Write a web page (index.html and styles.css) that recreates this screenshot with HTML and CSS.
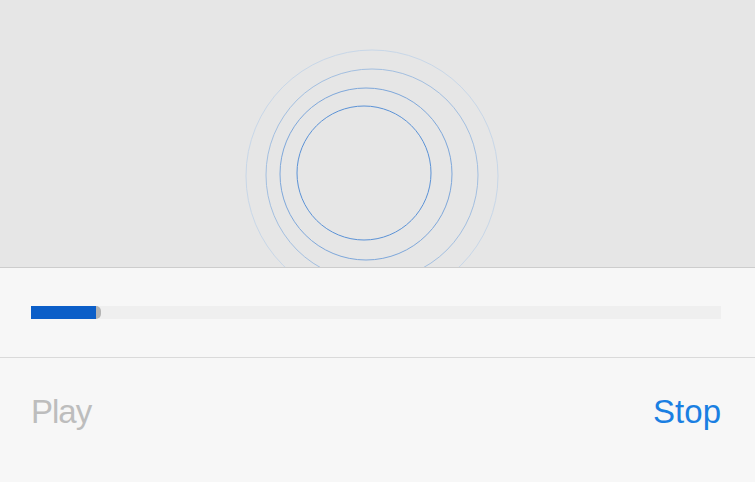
FILE: index.html
```html
<!DOCTYPE html>
<html lang="en">
<head>
<meta charset="utf-8">
<title>Recorder</title>
<link rel="stylesheet" href="styles.css">
</head>
<body>
<div class="app">
  <div class="stage">
    <svg class="rings" width="755" height="267" viewBox="0 0 755 267" xmlns="http://www.w3.org/2000/svg">
      <circle cx="372" cy="176" r="126" fill="none" stroke="#c8d7e8" stroke-width="1"/>
      <circle cx="372" cy="175" r="106" fill="none" stroke="#a3bfe0" stroke-width="1"/>
      <circle cx="366" cy="174" r="86" fill="none" stroke="#7ea7da" stroke-width="1"/>
      <circle cx="364" cy="173" r="67" fill="none" stroke="#5b92d6" stroke-width="1"/>
    </svg>
  </div>
  <div class="progress-row">
    <div class="track">
      <div class="fill" style="width:65px"></div>
      <div class="knob"></div>
    </div>
  </div>
  <div class="controls">
    <span class="btn btn-play">Play</span>
    <span class="btn btn-stop">Stop</span>
  </div>
</div>
</body>
</html>
```
FILE: styles.css
```css
html, body {
  margin: 0;
  padding: 0;
}
body {
  width: 755px;
  height: 482px;
  overflow: hidden;
  background: #f7f7f7;
  font-family: "Liberation Sans", Arial, sans-serif;
}
.app {
  display: flex;
  flex-direction: column;
  height: 482px;
}
.stage {
  height: 267px;
  background: #e6e6e6;
  border-bottom: 1px solid #cdcdcd;
  overflow: hidden;
}
.rings {
  display: block;
}
.progress-row {
  height: 89px;
  border-bottom: 1px solid #dadada;
  display: flex;
  align-items: center;
  padding: 0 34px 0 31px;
}
.track {
  flex: 1;
  height: 13px;
  background: #efefef;
  display: flex;
  align-items: center;
}
.fill {
  height: 13px;
  background: #0b5ec8;
}
.knob {
  width: 5px;
  height: 13px;
  background: #b4b4b4;
  border-radius: 0 7px 7px 0;
}
.controls {
  flex: 1;
  display: flex;
  justify-content: space-between;
  align-items: flex-start;
  padding: 35px 34px 0 31px;
}
.btn {
  font-size: 33px;
  line-height: 38px;
}
.btn-play {
  color: #bdbdbd;
  letter-spacing: -1px;
}
.btn-stop {
  color: #1a7fe2;
}
```
